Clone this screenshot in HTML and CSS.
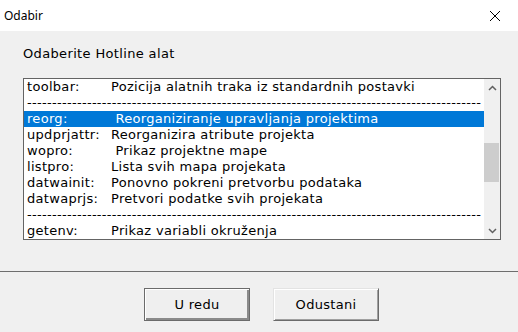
FILE: index.html
```html
<!DOCTYPE html>
<html lang="hr">
<head>
  <meta charset="UTF-8">
  <meta name="viewport" content="width=device-width, initial-scale=1.0">
  <title>Odabir</title>
  <link rel="stylesheet" href="styles.css">
</head>
<body>
  <div class="window">
    <div class="titlebar">
      <span class="title">Odabir</span>
      <svg class="close" width="12" height="12" viewBox="0 0 12 12">
        <path d="M1 1 L11 11 M11 1 L1 11" stroke="#000" stroke-width="1" fill="none"/>
      </svg>
    </div>

    <div class="content">
      <div class="prompt">Odaberite Hotline alat</div>

      <div class="listbox">
        <ul class="items">
          <li class="item"><span class="key">toolbar:</span><span class="desc">Pozicija alatnih traka iz standardnih postavki</span></li>
          <li class="item sep">-------------------------------------------------------------------------------------------</li>
          <li class="item selected"><span class="key">reorg:</span><span class="desc"> Reorganiziranje upravljanja projektima</span></li>
          <li class="item"><span class="key">updprjattr:</span><span class="desc">Reorganizira atribute projekta</span></li>
          <li class="item"><span class="key">wopro:</span><span class="desc"> Prikaz projektne mape</span></li>
          <li class="item"><span class="key">listpro:</span><span class="desc">Lista svih mapa projekata</span></li>
          <li class="item"><span class="key">datwainit:</span><span class="desc">Ponovno pokreni pretvorbu podataka</span></li>
          <li class="item"><span class="key">datwaprjs:</span><span class="desc">Pretvori podatke svih projekata</span></li>
          <li class="item sep">-------------------------------------------------------------------------------------------</li>
          <li class="item"><span class="key">getenv:</span><span class="desc">Prikaz variabli okruženja</span></li>
        </ul>
        <div class="scrollbar">
          <div class="arrow">
            <svg width="9" height="6" viewBox="0 0 9 6"><path d="M1 5 L4.5 1.5 L8 5" stroke="#606060" stroke-width="1.5" fill="none"/></svg>
          </div>
          <div class="track"><div class="thumb"></div></div>
          <div class="arrow">
            <svg width="9" height="6" viewBox="0 0 9 6"><path d="M1 1 L4.5 4.5 L8 1" stroke="#606060" stroke-width="1.5" fill="none"/></svg>
          </div>
        </div>
      </div>
    </div>

    <div class="footer">
      <button class="btn default">U redu</button>
      <button class="btn">Odustani</button>
    </div>
  </div>
</body>
</html>
```

FILE: styles.css
```css
body {
  margin: 0;
  background-color: #f0f0f0;
  font-family: "DejaVu Sans", Verdana, sans-serif;
  font-size: 13px;
  color: #000;
}
.window {
  width: 518px;
  height: 332px;
  display: flex;
  flex-direction: column;
  background-color: #f0f0f0;
}
.titlebar {
  height: 31px;
  background-color: #fff;
  display: flex;
  align-items: center;
  justify-content: space-between;
  padding: 0 17px 0 4px;
}
.title {
  font-family: "Noto Sans", sans-serif;
  font-size: 12px;
}
.content {
  height: 240px;
  padding: 15px 17px 0 23px;
  box-sizing: border-box;
}
.prompt {
  line-height: 16px;
  letter-spacing: 0.35px;
  margin-bottom: 16px;
}
.listbox {
  width: 478px;
  height: 162px;
  box-sizing: border-box;
  border: 1px solid #646464;
  background-color: #fff;
  display: flex;
}
.items {
  list-style: none;
  margin: 0;
  padding: 0;
  width: 460px;
  letter-spacing: 0.3px;
}
.item {
  height: 16px;
  line-height: 16px;
  padding-left: 3px;
  display: flex;
  white-space: pre;
}
.item .key {
  width: 84px;
  flex: none;
}
.item.sep {
  display: block;
}
.item.selected {
  background-color: #0078d7;
  color: #fff;
}
.scrollbar {
  width: 16px;
  background-color: #f0f0f0;
  display: flex;
  flex-direction: column;
}
.arrow {
  height: 17px;
  display: flex;
  align-items: center;
  justify-content: center;
}
.track {
  flex: 1;
  padding-top: 47px;
}
.thumb {
  height: 39px;
  margin-right: 1px;
  background-color: #cdcdcd;
}
.footer {
  flex: 1;
  border-top: 1px solid #6e6e6e;
  display: flex;
  justify-content: flex-start;
  gap: 23px;
  padding: 16px 0 0 144px;
  box-sizing: border-box;
}
.btn {
  width: 106px;
  height: 33px;
  font-family: "DejaVu Sans", Verdana, sans-serif;
  font-size: 13px;
  letter-spacing: 0.3px;
  color: #000;
  background-color: #efefef;
  border: 1px solid;
  border-color: #e3e3e3 #6b6b6b #6b6b6b #e3e3e3;
  box-shadow: inset 1px 1px #fff, inset -1px -1px #a0a0a0;
  padding: 0;
}
.btn.default {
  border-color: #6b6b6b;
  box-shadow: inset 1px 1px #fff, inset -2px -2px #8a8a8a;
}
```
